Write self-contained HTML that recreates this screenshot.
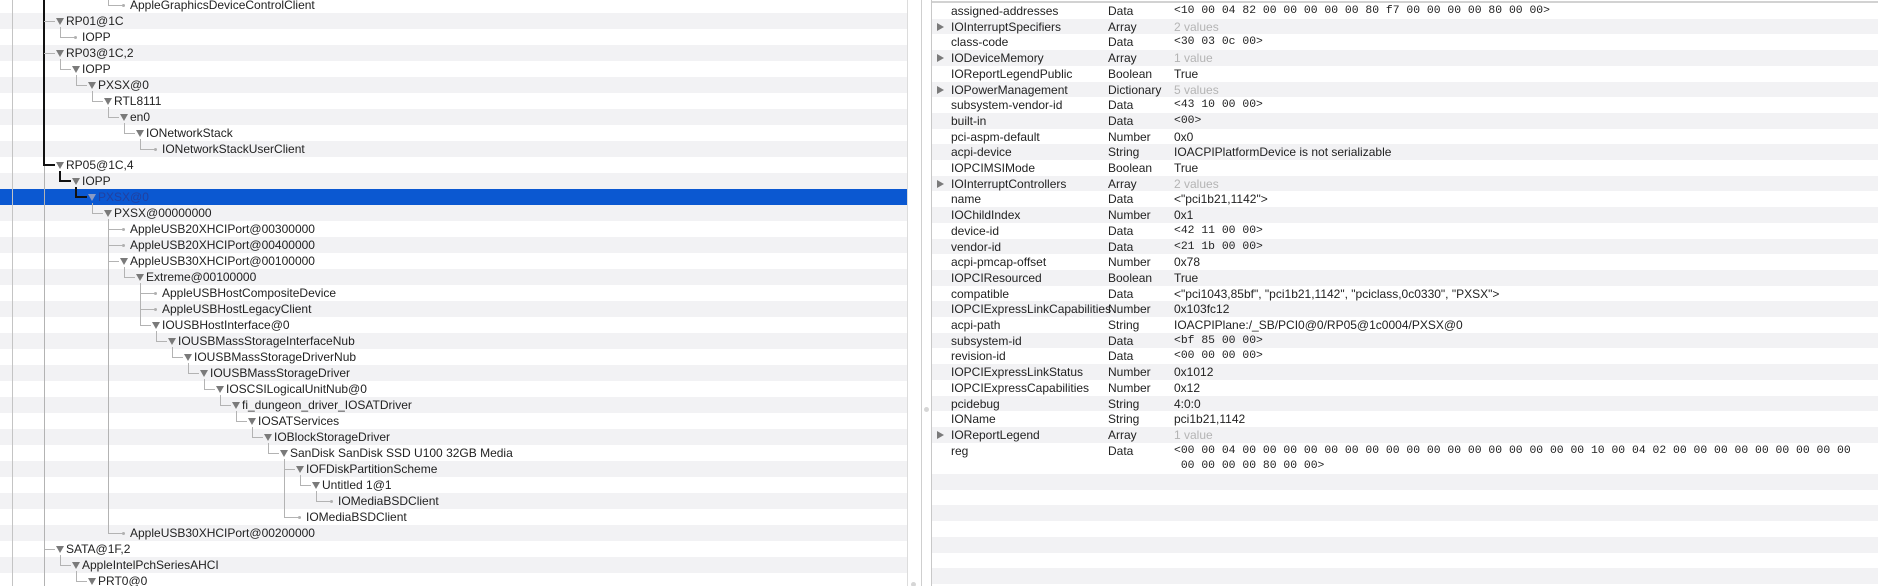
<!DOCTYPE html>
<html><head><meta charset="utf-8">
<style>
*{margin:0;padding:0;box-sizing:border-box}
html{width:1878px;height:586px;overflow:hidden}
body{width:1878px;height:586px;overflow:hidden;background:#fff;position:relative;font-family:"Liberation Sans",Helvetica,Arial,sans-serif;font-size:12px;color:#222}
#root{position:absolute;left:0;top:0;width:1878px;height:586px;overflow:hidden}
.a{position:absolute}
.t{position:absolute;white-space:nowrap;line-height:16px}
.m{font-family:"Liberation Mono",monospace;font-size:11.4px}
.g{color:#b4b4b4}
</style></head><body>
<div id="root"></div>
<script>
var H='';
function box(x,y,w,h,c){H+='<div class="a" style="left:'+x+'px;top:'+y+'px;width:'+w+'px;height:'+h+'px;background:'+c+'"></div>';}
function txt(x,y,s,cls,st){H+='<div class="t '+(cls||'')+'" style="left:'+x+'px;top:'+y+'px;'+(st||'')+'">'+s+'</div>';}
var nodes=[
[-1,'AppleGraphicsDeviceControlClient',4,1],
[0,'RP01@1C',0,0],[1,'IOPP',1,1],[2,'RP03@1C,2',0,0],[3,'IOPP',1,0],[4,'PXSX@0',2,0],[5,'RTL8111',3,0],[6,'en0',4,0],[7,'IONetworkStack',5,0],[8,'IONetworkStackUserClient',6,1],
[9,'RP05@1C,4',0,0],[10,'IOPP',1,0],[11,'PXSX@0',2,0],[12,'PXSX@00000000',3,0],[13,'AppleUSB20XHCIPort@00300000',4,1],[14,'AppleUSB20XHCIPort@00400000',4,1],[15,'AppleUSB30XHCIPort@00100000',4,0],[16,'Extreme@00100000',5,0],[17,'AppleUSBHostCompositeDevice',6,1],[18,'AppleUSBHostLegacyClient',6,1],[19,'IOUSBHostInterface@0',6,0],[20,'IOUSBMassStorageInterfaceNub',7,0],[21,'IOUSBMassStorageDriverNub',8,0],[22,'IOUSBMassStorageDriver',9,0],[23,'IOSCSILogicalUnitNub@0',10,0],[24,'fi_dungeon_driver_IOSATDriver',11,0],[25,'IOSATServices',12,0],[26,'IOBlockStorageDriver',13,0],[27,'SanDisk SanDisk SSD U100 32GB Media',14,0],[28,'IOFDiskPartitionScheme',15,0],[29,'Untitled 1@1',16,0],[30,'IOMediaBSDClient',17,1],[31,'IOMediaBSDClient',15,1],[32,'AppleUSB30XHCIPort@00200000',4,1],
[33,'SATA@1F,2',0,0],[34,'AppleIntelPchSeriesAHCI',1,0],[35,'PRT0@0',2,0]];
function ry(i){return 13+16*i;}
for(var i=-1;i<36;i++){ if(i%2==0) box(0,ry(i),907,16,'#f2f2f4'); }
box(0,ry(11),907,16,'#0b58d1');
var G='#b3b3b3',K='#111';
box(12,0,1,586,'#c4c4c4');
box(43,0,2,166,K); box(44,166,1,420,G);
function T(L){return 66+16*L;}
box(108,0,1,5,G);
for(var k=1;k<nodes.length;k++){
  var n=nodes[k];if(n[2]==0)continue;
  var p=null;for(var j=k-1;j>=0;j--){if(nodes[j][2]==n[2]-1){p=nodes[j];break;}if(nodes[j][2]<n[2]-1)break;}
  var x=T(n[2])-22, y1=p?ry(p[0])+14:0, y2=ry(n[0])+8;
  var dark=(n[0]==10||n[0]==11);
  if(dark) box(x-1,y1,2,y2-y1+1,K); else box(x,y1,1,y2-y1+1,G);
}
nodes.forEach(function(n){
  var i=n[0],L=n[2],t=T(L),y=ry(i),c=y+8;
  var dark=(i==9||i==10||i==11);
  var sx=t-22;
  if(L==0) sx=44;
  if(n[3]){ box(sx,c,t-8-sx,1,G); H+='<div class="a" style="left:'+(t-8)+'px;top:'+(c-1)+'px;width:3px;height:3px;border-radius:50%;background:#b0b0b0"></div>'; }
  else{
    if(dark) box(sx,c-1,t-11-sx,2,K); else box(sx,c,t-11-sx,1,G);
    H+='<div class="a" style="left:'+(t-10)+'px;top:'+(c-3)+'px;width:0;height:0;border-left:4px solid transparent;border-right:4px solid transparent;border-top:7px solid '+(i==11?'#8a9ac4':'#7a7a7a')+'"></div>';
  }
  txt(t,y,n[1],'',i==11?'color:#22409f':'');
});
box(907,0,1,586,'#dcdcdc');box(921,0,1,586,'#cfcfcf');box(931,0,1,586,'#c8c8c8');
H+='<div class="a" style="left:924px;top:407px;width:5px;height:5px;border-radius:50%;background:#d6d6d6"></div>';
H+='<div class="a" style="left:911px;top:582px;width:5px;height:5px;border-radius:50%;background:#d6d6d6"></div>';
box(932,1,946,2,'#d2d2d2');
var R=[
['assigned-addresses','Data','<10 00 04 82 00 00 00 00 00 80 f7 00 00 00 00 80 00 00>','m'],
['IOInterruptSpecifiers','Array','2 values','g',1],
['class-code','Data','<30 03 0c 00>','m'],
['IODeviceMemory','Array','1 value','g',1],
['IOReportLegendPublic','Boolean','True'],
['IOPowerManagement','Dictionary','5 values','g',1],
['subsystem-vendor-id','Data','<43 10 00 00>','m'],
['built-in','Data','<00>','m'],
['pci-aspm-default','Number','0x0'],
['acpi-device','String','IOACPIPlatformDevice is not serializable'],
['IOPCIMSIMode','Boolean','True'],
['IOInterruptControllers','Array','2 values','g',1],
['name','Data','&lt;"pci1b21,1142"&gt;'],
['IOChildIndex','Number','0x1'],
['device-id','Data','<42 11 00 00>','m'],
['vendor-id','Data','<21 1b 00 00>','m'],
['acpi-pmcap-offset','Number','0x78'],
['IOPCIResourced','Boolean','True'],
['compatible','Data','&lt;"pci1043,85bf", "pci1b21,1142", "pciclass,0c0330", "PXSX"&gt;'],
['IOPCIExpressLinkCapabilities','Number','0x103fc12'],
['acpi-path','String','IOACPIPlane:/_SB/PCI0@0/RP05@1c0004/PXSX@0'],
['subsystem-id','Data','<bf 85 00 00>','m'],
['revision-id','Data','<00 00 00 00>','m'],
['IOPCIExpressLinkStatus','Number','0x1012'],
['IOPCIExpressCapabilities','Number','0x12'],
['pcidebug','String','4:0:0'],
['IOName','String','pci1b21,1142'],
['IOReportLegend','Array','1 value','g',1],
['reg','Data','','m']];
var P=15.7;
function yy(k){return Math.round(3+P*k);}
for(var k=0;k<38;k++){ if(k%2==1){var y=k<29?yy(k):yy(k+1); var y2=(k<29?yy(k+1):yy(k+2)); if(y<586) box(932,y,946,Math.min(y2,586)-y,'#f2f2f4');} }
R.forEach(function(r,k){
  var y=yy(k);
  if(r[4]) H+='<div class="a" style="left:937px;top:'+(y+4)+'px;width:0;height:0;border-top:4px solid transparent;border-bottom:4px solid transparent;border-left:7px solid #7a7a7a"></div>';
  txt(951,y,r[0]);txt(1108,y,r[1]);
  var v=r[2];
  if(v.indexOf('&')<0) v=v.replace(/</g,'&lt;').replace(/>/g,'&gt;');
  txt(1174,y,v,r[3]||'');
});
var z=function(n){return Array(n+1).join(' 00');};
txt(1174,yy(28),'&lt;00 00 04 00'+z(16)+' 10 00 04 02'+z(9),'m');
txt(1174,yy(28)+15,' 00 00 00 00 80 00 00&gt;','m','white-space:pre');
document.getElementById('root').innerHTML=H;
</script>
</body></html>
